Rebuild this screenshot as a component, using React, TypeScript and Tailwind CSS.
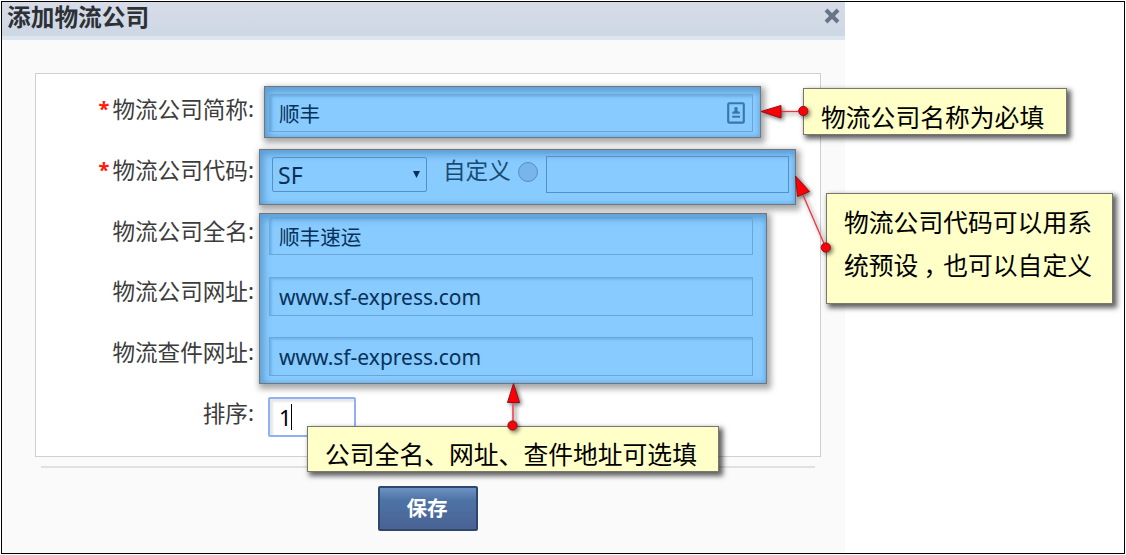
import type { ReactNode } from "react";

const FONT = "font-['Noto_Sans','Noto_Sans_CJK_SC',sans-serif]";
const CJK = "font-['Noto_Sans_CJK_SC',sans-serif]";

const labels = [
  { text: "物流公司简称", required: true },
  { text: "物流公司代码", required: true },
  { text: "物流公司全名", required: false },
  { text: "物流公司网址", required: false },
  { text: "物流查件网址", required: false },
  { text: "排序", required: false },
];

function Label({ text, required }: { text: string; required: boolean }) {
  return (
    <div className={`flex h-[60.8px] items-center justify-end text-[22.6px] leading-none text-[#3c3c3c] ${CJK}`}>
      {required && <span className="mr-[3px] font-['Noto_Sans'] text-[20px] font-bold leading-none text-[#ff1a0a]">*</span>}
      <span>{text}</span>
      <span className="font-['Noto_Sans']">:</span>
    </div>
  );
}

function Highlight({ className, children }: { className: string; children: ReactNode }) {
  return (
    <div
      className={`border border-[#6f767c] bg-[#88cbff] shadow-[2px_3px_6px_2px_rgba(0,0,0,0.34),inset_3px_4px_7px_1px_#5f9fd3,inset_-1px_-1px_4px_#70b4e8] ${className}`}
    >
      {children}
    </div>
  );
}

function Field({ className = "", children }: { className?: string; children?: ReactNode }) {
  return (
    <div
      className={`flex w-[484px] items-center justify-between border border-[#6aa6d7] pl-[9px] pr-[7px] text-[20.6px] leading-none text-[#07315a] shadow-[inset_2px_2px_2px_rgba(70,135,190,0.3)] ${className}`}
    >
      {children}
    </div>
  );
}

function ContactIcon() {
  return (
    <svg width="18" height="22" viewBox="0 0 18 22" fill="none">
      <rect x="1.2" y="1.2" width="15.6" height="19.4" rx="1.2" stroke="#3a76a8" strokeWidth="2.1" />
      <path d="M9 5a1.7 1.7 0 0 1 1.5 2.6v1.3l2.3 1.2v1.7H5.2v-1.7l2.3-1.2V7.6A1.7 1.7 0 0 1 9 5Z" fill="#3a76a8" />
      <path d="M5.2 14.7h7.8" stroke="#3a76a8" strokeWidth="2" />
    </svg>
  );
}

function Callout({ className, children }: { className: string; children: ReactNode }) {
  return (
    <div
      className={`absolute whitespace-nowrap border border-[#77776d] bg-[#ffffc8] text-[24.8px] text-black shadow-[3px_3px_5px_1px_rgba(0,0,0,0.62)] ${CJK} ${className}`}
    >
      {children}
    </div>
  );
}

function Arrows() {
  return (
    <svg className="absolute left-0 top-0 drop-shadow-[2px_2px_2px_rgba(0,0,0,0.55)]" width="1126" height="555" viewBox="0 0 1126 555">
      <g stroke="#f0333b" strokeWidth="1.3">
        <path d="M780 111.5H803" />
        <path d="M803 195 825.5 247" />
        <path d="M513 402V426" strokeWidth="2" stroke="#f0606a" />
      </g>
      <g fill="#fc0008" stroke="#8d1018" strokeWidth="1">
        <path d="M761 111.5 781 105.5V118Z" />
        <path d="M795.5 176 809.5 191.5 797.5 196.5Z" />
        <path d="M513.5 383.5 519.5 402.5H507.5Z" />
        <circle cx="803.3" cy="111" r="4.6" />
        <circle cx="825.8" cy="247.5" r="4.6" />
        <circle cx="512.5" cy="425.5" r="4.6" />
      </g>
    </svg>
  );
}

export default function App() {
  return (
    <div className={`relative h-[555px] w-[1126px] overflow-hidden bg-white pl-px pt-px ${FONT}`}>
      <div className="h-[553px] w-[1124px] border border-black">
        <div className="flex h-full w-[843px] flex-col bg-[#fafafa]">
          <header className="flex h-[38px] shrink-0 justify-between border-b-4 border-[#dce5f0] bg-linear-to-b from-[#d7dce7] to-[#cdd8e5] pl-[5px] pr-[5px]">
            <h1 className={`pt-[2px] text-[23.7px] font-bold leading-[24px] text-[#2d3035] ${CJK}`}>添加物流公司</h1>
            <svg className="mt-[6px]" width="16" height="16" viewBox="0 0 16 16">
              <path d="M2 2 14 14M14 2 2 14" stroke="#687487" strokeWidth="4" />
            </svg>
          </header>

          <main className="ml-[33px] mt-[33px] flex h-[384px] w-[786px] shrink-0 border border-[#d0d0d0] bg-white">
            <div className="w-[219px] pr-px pt-[5px]">
              {labels.map((l) => (
                <Label key={l.text} text={l.text} required={l.required} />
              ))}
            </div>
            <div className="flex flex-col items-start pl-[4px] pt-[12px]">
              <Highlight className="ml-[5px] h-[52px] w-[497px] pl-[4px] pt-[7px]">
                <Field className="h-[38px]">
                  <span className="pt-[3px]">顺丰</span>
                  <ContactIcon />
                </Field>
              </Highlight>
              <Highlight className="mt-[11px] flex h-[56px] w-[537px] items-start pl-[12px] pt-[6px]">
                <div className="mt-px flex h-[35px] w-[155px] items-center justify-between rounded-[2px] border border-[#5590c2] pl-[5px] pr-[6px] text-[23px] leading-none text-[#07315a]">
                  <span className="pt-px">SF</span>
                  <svg width="7" height="7" viewBox="0 0 7 7">
                    <path d="M0 0h7L3.5 7Z" fill="#07315a" />
                  </svg>
                </div>
                <span className={`ml-[16px] mt-[2px] text-[22.6px] leading-[24px] text-[#194a75] ${CJK}`}>自定义</span>
                <span className="ml-[7px] mt-[6px] size-[20px] rounded-full border border-[#5890be] bg-[#78b5e8]" />
                <div className="ml-[8px] h-[37px] w-[243px] border border-[#5590c2]" />
              </Highlight>
              <Highlight className="mt-[8px] flex h-[171px] w-[508px] flex-col pl-[9px] pt-[2px]">
                <Field className="h-[39px]">
                  <span className="pt-[3px]">顺丰速运</span>
                </Field>
                <Field className="mt-[22px] h-[39px]">
                  <span className="pt-px text-[21px]">www.sf-express.com</span>
                </Field>
                <Field className="mt-[21px] h-[39px]">
                  <span className="pt-px text-[21px]">www.sf-express.com</span>
                </Field>
              </Highlight>
              <div className="ml-[9px] mt-[13px] flex h-[40px] w-[88px] items-center rounded-[2px] border-2 border-[#8fb1f3] bg-white pl-[9px] text-[22px] leading-none text-black shadow-[inset_3px_3px_2px_#e7e7e7]">
                <span>1</span>
                <span className="-ml-px h-[26px] w-px bg-black" />
              </div>
            </div>
          </main>

          <div className="ml-[39px] mt-[9px] h-[2px] w-[774px] shrink-0 bg-[#e1e1e1]" />
          <button
            className={`ml-[376px] mt-[18px] h-[45px] w-[100px] shrink-0 rounded-[2px] border-2 border-[#2e476d] bg-linear-to-b from-[#6c93c4] via-[#4d73a5] via-30% to-[#4a6294] pb-[3px] pr-[2px] text-[20.6px] font-bold leading-none text-white ${CJK}`}
          >
            保存
          </button>
        </div>
      </div>

      <Callout className="left-[803px] top-[88px] h-[47px] w-[264px] pl-[17px] pt-[6px] leading-[43px]">
        物流公司名称为必填
      </Callout>
      <Callout className="left-[826px] top-[193px] h-[111px] w-[287px] pl-[17px] pt-[6px] leading-[43px]">
        <div>物流公司代码可以用系</div>
        <div>
          统预设<span className="ml-[5px] mr-[7.4px] [font-feature-settings:'halt']">，</span>也可以自定义
        </div>
      </Callout>
      <Callout className="left-[307px] top-[426px] h-[46px] w-[412px] pl-[17px] pt-[5px] leading-[43px]">
        公司全名、网址、查件地址可选填
      </Callout>
      <Arrows />
    </div>
  );
}
